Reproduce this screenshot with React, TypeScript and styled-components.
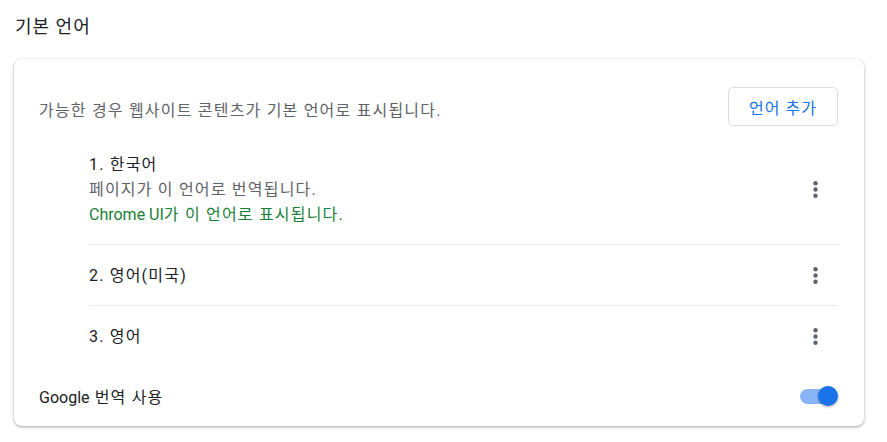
import styled, { createGlobalStyle } from "styled-components";

const GlobalStyle = createGlobalStyle`
    body {
        margin: 0;
        background: #fff;
        font-family: Roboto, "Noto Sans CJK KR", sans-serif;
        -webkit-font-smoothing: antialiased;
    }
`;

const Page = styled.main`
    padding: 14px 23px 16px 14px;
`;

const SectionTitle = styled.h2`
    margin: 0 0 20px 1px;
    font-size: 18px;
    font-weight: 400;
    line-height: 25px;
    letter-spacing: 1px;
    color: #202124;
`;

const Card = styled.section`
    background: #fff;
    border-radius: 8px;
    box-shadow: 0 1px 2px rgba(60, 64, 67, 0.3), 0 1px 3px 1px rgba(60, 64, 67, 0.15);
    letter-spacing: 1.2px;
`;

// latin words keep their natural spacing, hangul gets the extra room
const Latin = styled.span`
    letter-spacing: 0;
`;

const Header = styled.div`
    display: flex;
    align-items: center;
    justify-content: space-between;
    padding: 28px 26px 0 25px;
`;

const Description = styled.p`
    margin: 0;
    padding-top: 7px;
    font-size: 16px;
    line-height: 25px;
    color: #5f6368;
`;

const OutlineButton = styled.button`
    width: 110px;
    height: 39px;
    border: 1px solid #dadce0;
    border-radius: 5px;
    background: #fff;
    color: #1a73e8;
    font-family: inherit;
    font-size: 16px;
    letter-spacing: 1px;
    cursor: pointer;
`;

const LanguageList = styled.ul`
    list-style: none;
    margin: 9px 26px 0 75px;
    padding: 0;
`;

const LanguageItem = styled.li`
    display: flex;
    align-items: center;
    min-height: 61px;
    padding: 17px 0;
    box-sizing: border-box;
    & + & {
        border-top: 1px solid #e8eaed;
    }
`;

const ItemText = styled.div`
    flex: 1;
    font-size: 16px;
    line-height: 25px;
`;

const Line = styled.div<{ $tone?: "main" | "sub" | "ok" }>`
    color: ${(p) => (p.$tone === "sub" ? "#5f6368" : p.$tone === "ok" ? "#188038" : "#202124")};
`;

const IconButton = styled.button`
    display: flex;
    align-items: center;
    justify-content: center;
    width: 45px;
    height: 45px;
    margin: -10px 0;
    padding: 0;
    border: none;
    border-radius: 50%;
    background: transparent;
    cursor: pointer;
`;

const ToggleRow = styled.div`
    display: flex;
    align-items: center;
    justify-content: space-between;
    height: 60px;
    padding: 0 26px 0 25px;
    font-size: 16px;
    color: #202124;
`;

const Toggle = styled.span`
    position: relative;
    display: inline-block;
    width: 35px;
    height: 15px;
    margin-right: 3px;
    border-radius: 8px;
    background: #8ab4f8;
`;

const Knob = styled.span`
    position: absolute;
    top: -3px;
    right: -3px;
    width: 20px;
    height: 20px;
    border-radius: 50%;
    background: #1a73e8;
    box-shadow: 0 1px 3px rgba(0, 0, 0, 0.35);
`;

function MoreIcon() {
    return (
        <svg width="25" height="25" viewBox="0 0 24 24" fill="#5f6368">
            <circle cx="12" cy="6" r="2.1" />
            <circle cx="12" cy="12" r="2.1" />
            <circle cx="12" cy="18" r="2.1" />
        </svg>
    );
}

const languages = [
    { name: "1. 한국어", notes: ["페이지가 이 언어로 번역됩니다."], ui: true },
    { name: "2. 영어(미국)", notes: [] },
    { name: "3. 영어", notes: [] },
];

export default function App() {
    return (
        <Page>
            <GlobalStyle />
            <SectionTitle>기본 언어</SectionTitle>
            <Card>
                <Header>
                    <Description>가능한 경우 웹사이트 콘텐츠가 기본 언어로 표시됩니다.</Description>
                    <OutlineButton>언어 추가</OutlineButton>
                </Header>
                <LanguageList>
                    {languages.map((lang) => (
                        <LanguageItem key={lang.name}>
                            <ItemText>
                                <Line>{lang.name}</Line>
                                {lang.notes.map((n) => (
                                    <Line key={n} $tone="sub">{n}</Line>
                                ))}
                                {lang.ui && (
                                    <Line $tone="ok">
                                        <Latin>Chrome UI</Latin>가 이 언어로 표시됩니다.
                                    </Line>
                                )}
                            </ItemText>
                            <IconButton aria-label="더보기">
                                <MoreIcon />
                            </IconButton>
                        </LanguageItem>
                    ))}
                </LanguageList>
                <ToggleRow>
                    <span>
                        <Latin>Google</Latin> 번역 사용
                    </span>
                    <Toggle role="switch" aria-checked="true">
                        <Knob />
                    </Toggle>
                </ToggleRow>
            </Card>
        </Page>
    );
}
